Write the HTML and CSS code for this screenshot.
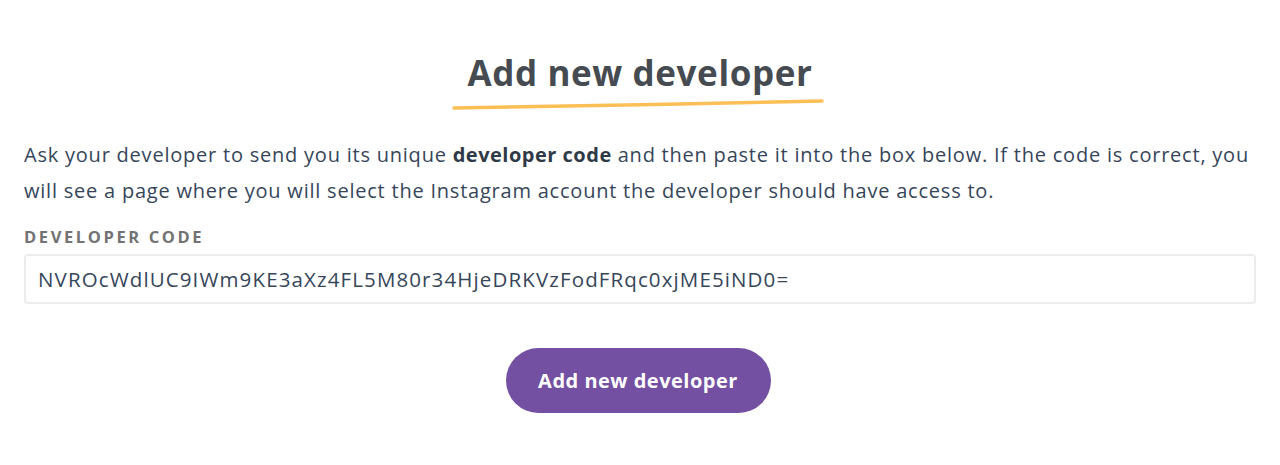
FILE: index.html
```html
<!DOCTYPE html>
<html lang="en">
<head>
    <meta charset="UTF-8">
    <meta name="viewport" content="width=device-width, initial-scale=1.0">
    <title>Add new developer</title>
    <link rel="stylesheet" href="styles.css">
</head>
<body>

<div class="container">
    <div class="title-wrap">
        <h2 class="title">Add new developer</h2>
        <svg class="title-line" width="372" height="12" viewBox="0 0 372 12">
            <path d="M2 9 C 120 7, 250 5, 370 2" stroke="#fbbf55" stroke-width="3.5" fill="none" stroke-linecap="round"/>
        </svg>
    </div>

    <p class="intro">Ask your developer to send you its unique <b>developer code</b> and then paste it into the box below. If the code is correct, you will see a page where you will select the Instagram account the developer should have access to.</p>

    <label for="code">DEVELOPER CODE</label>
    <input type="text" id="code" value="NVROcWdlUC9IWm9KE3aXz4FL5M80r34HjeDRKVzFodFRqc0xjME5iND0=">

    <div class="actions">
        <button>Add new developer</button>
    </div>
</div>

</body>
</html>
```

FILE: styles.css
```css
body {
    font-family: "Open Sans", Arial, sans-serif;
    margin: 0;
    background-color: #fff;
    color: #36465a;
}

.container {
    padding: 49px 24px 0;
}

.title-wrap {
    display: flex;
    flex-direction: column;
    align-items: center;
}

.title {
    margin: 0;
    font-size: 35px;
    font-weight: 700;
    letter-spacing: 0.6px;
    color: #464b52;
    line-height: 48px;
}

.title-line {
    display: block;
    margin-top: 2px;
    margin-left: -4px;
}

.intro {
    margin: 26px 0 0;
    font-size: 20px;
    letter-spacing: 0.78px;
    line-height: 36px;
    color: #36465a;
}

.intro b {
    font-weight: 700;
    letter-spacing: 0.5px;
    color: #2f3a47;
}

label {
    display: block;
    margin-top: 16px;
    font-size: 16.5px;
    font-weight: 700;
    letter-spacing: 2.6px;
    color: #737373;
}

input[type="text"] {
    display: block;
    width: 100%;
    height: 50px;
    margin-top: 6px;
    padding: 0 12px;
    font-family: inherit;
    font-size: 20.5px;
    letter-spacing: 1.12px;
    color: #36465a;
    border: 2px solid #ececec;
    border-radius: 4px;
    box-sizing: border-box;
}

.actions {
    display: flex;
    justify-content: center;
    margin-top: 44px;
}

button {
    width: 265px;
    height: 65px;
    margin-right: 4px;
    font-family: inherit;
    font-size: 20px;
    font-weight: 700;
    letter-spacing: 0.5px;
    background-color: #7350a1;
    color: white;
    border: none;
    border-radius: 33px;
    cursor: pointer;
}
```
